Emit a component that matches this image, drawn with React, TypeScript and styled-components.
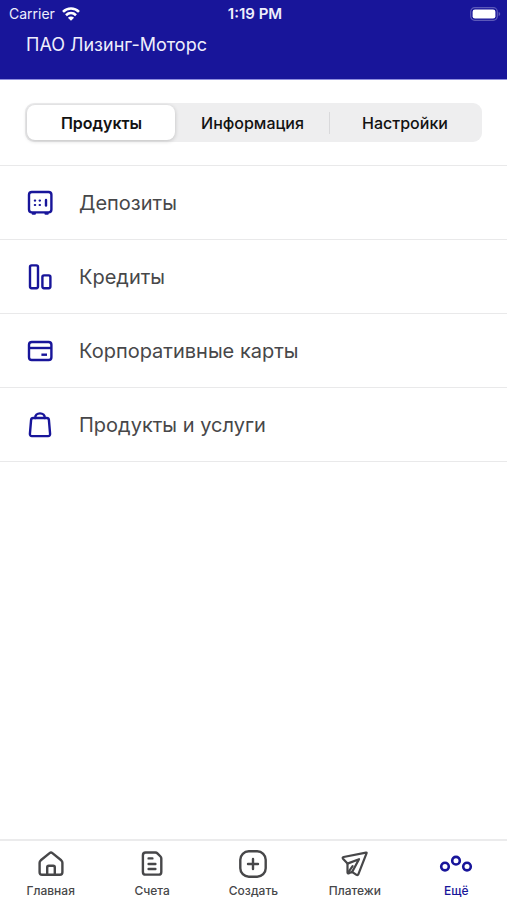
import React, { useState } from "react";
import styled, { createGlobalStyle } from "styled-components";

const navy = "#18159a";
const gray = "#474749";

const GlobalStyle = createGlobalStyle`
  *, *::before, *::after { box-sizing: border-box; }
  body {
    margin: 0;
    background: #fff;
    font-family: Inter, "Liberation Sans", sans-serif;
  }
  button { font: inherit; cursor: pointer; }
`;

const Screen = styled.div`
  display: flex;
  flex-direction: column;
  min-height: 100vh;
`;

const Header = styled.header`
  background: ${navy};
  border-bottom: 1px solid #8f8ede;
  color: #eeeefc;
  padding-bottom: 22px;
`;

const StatusBar = styled.div`
  display: grid;
  grid-template-columns: 1fr auto 1fr;
  align-items: center;
  height: 27px;
  padding: 0 6px 0 9px;
  font-size: 14px;
`;

const Carrier = styled.div`
  display: flex;
  align-items: center;
  gap: 7px;
`;

const Clock = styled.time`
  font-size: 15px;
  font-weight: 600;
`;

const Battery = styled.div`
  display: flex;
  justify-content: flex-end;
`;

const Company = styled.h1`
  margin: 6px 26px 0;
  font-size: 18px;
  line-height: 24px;
  font-weight: 400;
`;

const Main = styled.main`
  flex: 1;
`;

const Segments = styled.div`
  display: grid;
  grid-template-columns: 149fr 155fr 152fr;
  margin: 23px 25px;
  padding: 2px;
  border-radius: 9px;
  background: #eeeeef;
`;

const Segment = styled.button<{ $active: boolean; $divider: boolean }>`
  height: 35px;
  padding: 0;
  border: 0;
  border-radius: 8px;
  background: ${(p) => (p.$active ? "#fff" : "transparent")};
  box-shadow: ${(p) => (p.$active ? "0 1px 4px rgba(0, 0, 0, 0.2)" : "none")};
  color: #121212;
  display: flex;
  align-items: center;

  &::before {
    content: "";
    width: 1px;
    height: 22px;
    background: ${(p) => (p.$divider ? "#d9d9db" : "transparent")};
  }
`;

const SegmentLabel = styled.span<{ $active: boolean }>`
  flex: 1;
  text-align: center;
  font-size: 16px;
  font-weight: ${(p) => (p.$active ? 600 : 500)};
`;

const Products = styled.ul`
  margin: 0;
  padding: 0;
  list-style: none;
  border-top: 1px solid #e9e9ea;
`;

const ProductLink = styled.a`
  display: flex;
  align-items: center;
  gap: 25px;
  height: 74px;
  padding: 0 26px;
  border-bottom: 1px solid #e9e9ea;
  color: ${gray};
  font-size: 20px;
  text-decoration: none;

  svg { color: ${navy}; }
`;

const TabBar = styled.nav`
  display: grid;
  grid-template-columns: repeat(5, 1fr);
  border-top: 2px solid #ebebec;
  height: 61px;
`;

const TabLink = styled.a<{ $active: boolean }>`
  display: flex;
  flex-direction: column;
  align-items: center;
  gap: 5px;
  padding-top: 9px;
  color: ${(p) => (p.$active ? navy : gray)};
  font-size: 12px;
  line-height: 16px;
  font-weight: 500;
  text-decoration: none;
`;

type IconProps = { size?: number; width?: number; children: React.ReactNode };

const Icon = ({ size = 28, width = 2.4, children }: IconProps) => (
  <svg
    width={size}
    height={size}
    viewBox={`0 0 ${size} ${size}`}
    fill="none"
    stroke="currentColor"
    strokeWidth={width}
    strokeLinecap="round"
    strokeLinejoin="round"
    aria-hidden="true"
  >
    {children}
  </svg>
);

const WifiIcon = () => (
  <svg width="18" height="14" viewBox="0 0 18 14" fill="none" stroke="#fff" strokeWidth="2.6" aria-hidden="true">
    <path d="M1 4.9C5.5.4 12.5.4 17 4.9" />
    <path d="M4 8.2c2.9-2.8 7.1-2.8 10 0" />
    <path d="M9 13.8 5.9 10.7c1.8-1.6 4.4-1.6 6.2 0Z" fill="#fff" stroke="none" />
  </svg>
);

const BatteryIcon = () => (
  <svg width="31" height="14" viewBox="0 0 31 14" aria-label="Battery full" role="img">
    <rect x=".7" y=".7" width="26.6" height="12.6" rx="4" fill="none" stroke="#5c59b9" strokeWidth="1.2" />
    <rect x="2.6" y="2.4" width="22.8" height="9.2" rx="2.4" fill="#fff" />
    <path d="M28.6 5v4c1-.3 1.6-1.1 1.6-2s-.6-1.7-1.6-2Z" fill="#5c59b9" />
  </svg>
);

const SafeIcon = () => (
  <Icon>
    <rect x="3" y="3" width="22.4" height="20.4" rx="2.8" />
    <path d="M6.8 24.6h2M19.6 24.6h2" />
    <path d="M8.8 11.6h.4M13.6 11.6h.4M8.8 16h.4M13.6 16h.4" strokeWidth="2.1" />
    <path d="M20 11v5.6" />
  </Icon>
);

const BarsIcon = () => (
  <Icon>
    <rect x="4" y="2.4" width="8" height="22.8" rx="1.6" />
    <rect x="16.4" y="12.4" width="8" height="12.8" rx="1.6" />
  </Icon>
);

const CardIcon = () => (
  <Icon>
    <rect x="3" y="5" width="22.4" height="18" rx="2.8" />
    <path d="M3 11h22.4" strokeLinecap="butt" />
    <path d="M15.4 17.7h5.6" strokeLinecap="butt" />
  </Icon>
);

const BagIcon = () => (
  <Icon>
    <path d="M7.2 7h13.6c1.3 0 2 .8 2.1 1.9l1.2 14c.1 1.3-.7 2.2-2 2.2H5.9c-1.3 0-2.1-.9-2-2.2l1.2-14C5.2 7.8 5.9 7 7.2 7Z" />
    <path d="M9.2 7c0-2.600 1.900-4.600 4.800-4.600S18.800 4.400 18.800 7" />
  </Icon>
);

const HomeIcon = () => (
  <Icon>
    <path d="M2.6 12.8c0-1 .4-1.8 1.200-2.500l8.800-7.200c.9-.7 1.900-.7 2.800 0l8.800 7.200c.8.700 1.200 1.500 1.200 2.500v9.400c0 1.600-.9 2.500-2.500 2.500H5.100c-1.600 0-2.500-.9-2.500-2.500Z" />
    <path d="M10.200 24.400v-7c0-1 .6-1.600 1.600-1.600h4.400c1 0 1.600.6 1.600 1.600v7" />
  </Icon>
);

const DocumentIcon = () => (
  <Icon>
    <path d="M7.600 2.500h9.800c.8 0 1.500.3 2 .8l3.100 3.200c.5.500.8 1.200.8 2v13.400c0 1.700-1 2.700-2.700 2.700h-13c-1.700 0-2.700-1-2.700-2.700V5.200c0-1.700 1-2.700 2.700-2.700Z" />
    <path d="M10.600 8.400h3.800M10.600 14h6.800M10.600 19h6.800" />
  </Icon>
);

const CreateIcon = () => (
  <Icon>
    <rect x="1.300" y="1.300" width="25.400" height="25.400" rx="8.500" />
    <path d="M14 9v10M9 14h10" />
  </Icon>
);

const PlaneIcon = () => (
  <Icon width={2.2}>
    <path d="M25 2.600 2.600 7c-1 .2-1.200 1-.6 1.700L6.500 13.600v8.600c0 1 .6 1.400 1.500 1l3-1.400 4.500 3c.8.500 1.600.3 1.900-.6L25.600 3.200c.2-.5-.1-.7-.6-.6Z" />
    <path d="M6.500 13.600 18 9.200l-6.600 12.400" />
    <path d="m7 22.600 4.600-6.400" />
  </Icon>
);

const MoreIcon = () => (
  <svg width="34" height="28" viewBox="0 0 34 28" fill="none" stroke="currentColor" strokeWidth="2.6" aria-hidden="true">
    <circle cx="6" cy="16.6" r="3.8" />
    <circle cx="17" cy="10.7" r="3.8" />
    <circle cx="28" cy="16.6" r="3.8" />
  </svg>
);

const segments = ["Продукты", "Информация", "Настройки"];

const products = [
  { label: "Депозиты", icon: <SafeIcon /> },
  { label: "Кредиты", icon: <BarsIcon /> },
  { label: "Корпоративные карты", icon: <CardIcon /> },
  { label: "Продукты и услуги", icon: <BagIcon /> },
];

const tabs = [
  { label: "Главная", icon: <HomeIcon /> },
  { label: "Счета", icon: <DocumentIcon /> },
  { label: "Создать", icon: <CreateIcon /> },
  { label: "Платежи", icon: <PlaneIcon /> },
  { label: "Ещё", icon: <MoreIcon /> },
];

export default function App() {
  const [selected, setSelected] = useState(0);
  return (
    <Screen>
      <GlobalStyle />
      <Header>
        <StatusBar>
          <Carrier>
            Carrier
            <WifiIcon />
          </Carrier>
          <Clock>1:19 PM</Clock>
          <Battery>
            <BatteryIcon />
          </Battery>
        </StatusBar>
        <Company>ПАО Лизинг-Моторс</Company>
      </Header>
      <Main>
        <Segments>
          {segments.map((label, i) => (
            <Segment
              key={label}
              type="button"
              aria-pressed={i === selected}
              $active={i === selected}
              $divider={i > 0 && i !== selected && i - 1 !== selected}
              onClick={() => setSelected(i)}
            >
              <SegmentLabel $active={i === selected}>{label}</SegmentLabel>
            </Segment>
          ))}
        </Segments>
        <Products>
          {products.map(({ label, icon }) => (
            <li key={label}>
              <ProductLink href="#">
                {icon}
                {label}
              </ProductLink>
            </li>
          ))}
        </Products>
      </Main>
      <TabBar>
        {tabs.map(({ label, icon }, i) => (
          <TabLink key={label} href="#" $active={i === 4} aria-current={i === 4 ? "page" : undefined}>
            {icon}
            {label}
          </TabLink>
        ))}
      </TabBar>
    </Screen>
  );
}
